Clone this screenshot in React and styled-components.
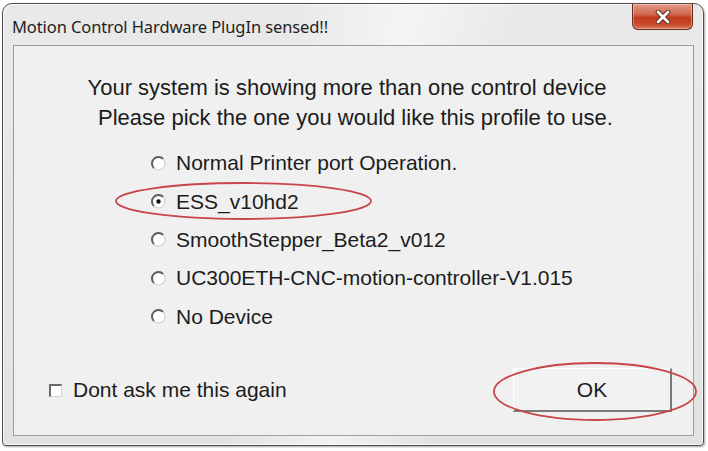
import React from 'react';
import styled, { createGlobalStyle } from 'styled-components';

const GlobalStyle = createGlobalStyle`
  html, body {
    margin: 0;
    padding: 0;
    background: #ffffff;
  }
  body {
    width: 708px;
    height: 451px;
    overflow: hidden;
  }
`;

const Window = styled.div`
  box-sizing: border-box;
  width: 702px;
  height: 443px;
  margin: 3px 0 0 2px;
  border: 1px solid #4e4e4e;
  border-radius: 10px 10px 4px 4px;
  background:
    linear-gradient(100deg, rgba(255,255,255,0) 38%, rgba(255,255,255,0.55) 52%, rgba(255,255,255,0) 66%),
    linear-gradient(180deg, #e9e9e9 0%, #e2e2e2 100%);
  box-shadow: inset 0 0 0 1px rgba(255,255,255,0.7), 1px 1px 2px rgba(0,0,0,0.35);
  display: flex;
  flex-direction: column;
`;

const TitleBar = styled.div`
  height: 41px;
  display: flex;
  align-items: flex-start;
  justify-content: space-between;
  padding: 0 10px 0 9px;
`;

const Title = styled.div`
  margin-top: 11px;
  font-family: "Noto Sans", "Open Sans", sans-serif;
  font-size: 16.5px;
  color: #1e1e1e;
  letter-spacing: -0.1px;
`;

const CloseButton = styled.div`
  width: 61px;
  height: 26px;
  box-sizing: border-box;
  border: 1px solid #6b2a20;
  border-top: none;
  border-radius: 0 0 6px 6px;
  background: linear-gradient(180deg, #e49a86 0%, #d06a52 40%, #c03a1a 55%, #c84a2a 80%, #dc7a58 100%);
  box-shadow: inset 0 0 0 1px rgba(255,255,255,0.35);
  display: flex;
  align-items: center;
  justify-content: center;
`;

const Client = styled.div`
  flex: 1;
  margin: 0 9px 9px 10px;
  border: 1px solid #9d9d9d;
  background: #f0f0f0;
  display: flex;
  flex-direction: column;
  font-family: "Liberation Sans", Arial, sans-serif;
  color: #1c1c1c;
`;

const Message = styled.div`
  margin-top: 27px;
  text-align: center;
  font-size: 22px;
  line-height: 30px;
`;

const MessageLine = styled.div`
  padding: ${p => (p.$shift > 0 ? `0 0 0 ${p.$shift}px` : `0 ${-p.$shift}px 0 0`)};
`;

const Options = styled.div`
  margin-top: 11px;
  margin-left: 137px;
  display: flex;
  flex-direction: column;
`;

const OptionRow = styled.div`
  position: relative;
  height: 38.4px;
  display: flex;
  align-items: center;
  gap: 10px;
  font-size: 21px;
`;

const Marker = styled.svg`
  position: absolute;
  pointer-events: none;
  overflow: visible;
`;

const BottomRow = styled.div`
  margin-top: auto;
  margin-bottom: 23px;
  padding: 0 21px 0 35px;
  display: flex;
  align-items: center;
  justify-content: space-between;
`;

const CheckLabel = styled.div`
  display: flex;
  align-items: center;
  gap: 11px;
  font-size: 21px;
`;

const CheckBox = styled.span`
  display: inline-block;
  width: 13px;
  height: 13px;
  box-sizing: border-box;
  background: #ffffff;
  border-top: 2px solid #6a6a6a;
  border-left: 2px solid #6a6a6a;
  border-right: 1px solid #d4d4d4;
  border-bottom: 1px solid #d4d4d4;
`;

const OkWrap = styled.div`
  position: relative;
`;

const OkButton = styled.div`
  width: 159px;
  height: 44px;
  box-sizing: border-box;
  border-top: 1px solid #ffffff;
  border-left: 1px solid #ffffff;
  border-right: 2px solid #7a7a7a;
  border-bottom: 2px solid #7a7a7a;
  background: #f2f2f2;
  display: flex;
  align-items: center;
  justify-content: center;
  font-size: 21px;
`;

function Radio({ checked }) {
  return (
    <svg width="15" height="15" viewBox="0 0 15 15">
      <circle cx="7.5" cy="7.5" r="6.5" fill="#ffffff" />
      <path d="M12.1 2.9 A6.5 6.5 0 0 1 2.9 12.1" fill="none" stroke="#d0d0d0" strokeWidth="1.2" />
      <path d="M2.9 12.1 A6.5 6.5 0 0 1 12.1 2.9" fill="none" stroke="#5e5e5e" strokeWidth="2" />
      {checked && <circle cx="7.5" cy="7.5" r="2.2" fill="#111" />}
    </svg>
  );
}

function Ring({ left, top, width, height }) {
  return (
    <Marker
      width={width}
      height={height}
      style={{ left, top }}
      viewBox={`0 0 ${width} ${height}`}
    >
      <ellipse
        cx={width / 2}
        cy={height / 2}
        rx={width / 2 - 1}
        ry={height / 2 - 1}
        fill="none"
        stroke="#c8454c"
        strokeWidth="1.8"
      />
    </Marker>
  );
}

const options = [
  { label: 'Normal Printer port Operation.' },
  { label: 'ESS_v10hd2', checked: true },
  { label: 'SmoothStepper_Beta2_v012' },
  { label: 'UC300ETH-CNC-motion-controller-V1.015' },
  { label: 'No Device' },
];

export default function App() {
  return (
    <>
      <GlobalStyle />
      <Window>
        <TitleBar>
          <Title>Motion Control Hardware PlugIn sensed!!</Title>
          <CloseButton>
            <svg width="16" height="14" viewBox="0 0 16 14">
              <path d="M3 2 L13 12 M13 2 L3 12" stroke="#5a2a20" strokeWidth="4.6" strokeLinecap="round" />
              <path d="M3 2 L13 12 M13 2 L3 12" stroke="#ffffff" strokeWidth="2.8" strokeLinecap="round" />
            </svg>
          </CloseButton>
        </TitleBar>
        <Client>
          <Message>
            <MessageLine $shift={-13}>Your system is showing more than one control device</MessageLine>
            <MessageLine $shift={4}>Please pick the one you would like this profile to use.</MessageLine>
          </Message>
          <Options>
            {options.map(o => (
              <OptionRow key={o.label}>
                <Radio checked={o.checked} />
                <span>{o.label}</span>
                {o.checked && <Ring left={-36} top={0} width={257} height={38} />}
              </OptionRow>
            ))}
          </Options>
          <BottomRow>
            <CheckLabel>
              <CheckBox />
              <span>Dont ask me this again</span>
            </CheckLabel>
            <OkWrap>
              <OkButton>OK</OkButton>
              <Ring left={-20} top={-6} width={204} height={59} />
            </OkWrap>
          </BottomRow>
        </Client>
      </Window>
    </>
  );
}
